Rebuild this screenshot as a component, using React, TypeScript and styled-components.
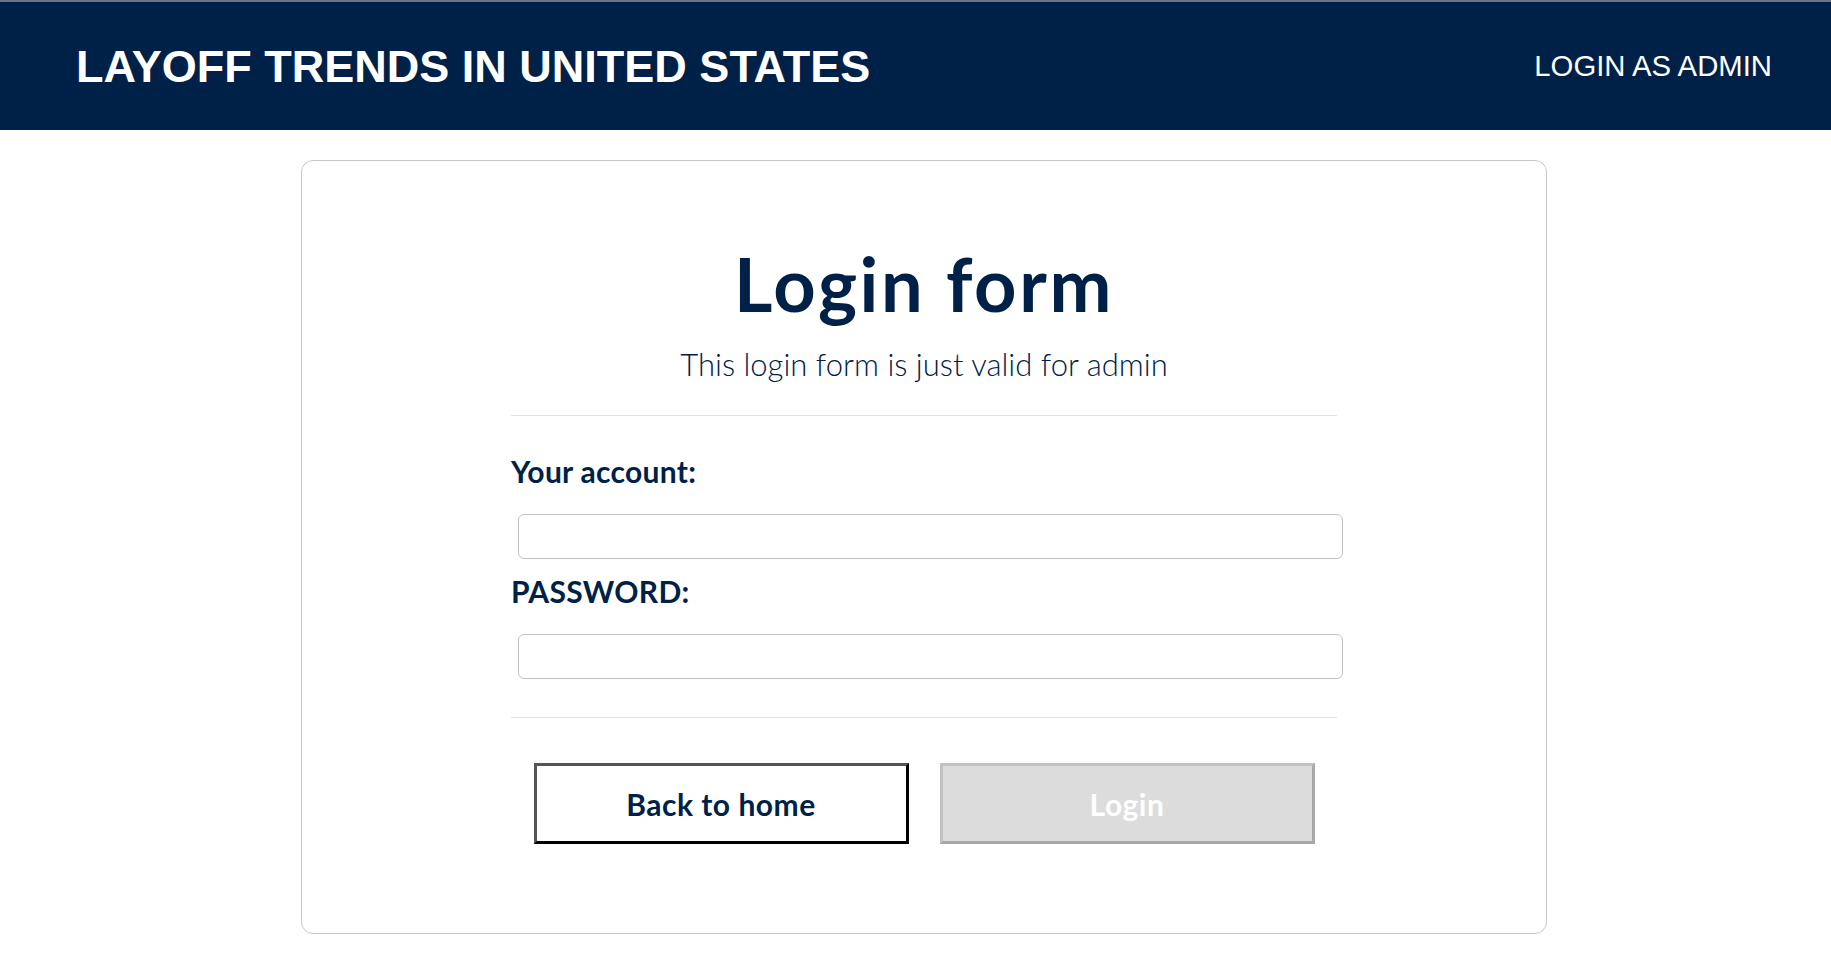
import React from "react";
import styled, { createGlobalStyle } from "styled-components";

const GlobalStyle = createGlobalStyle`
  html, body {
    margin: 0;
    padding: 0;
    background: #ffffff;
  }
  body {
    font-family: "Lato", "Open Sans", sans-serif;
    color: #002147;
  }
  * { box-sizing: border-box; }
`;

const NAVY = "#002147";

const Header = styled.header`
  height: 130px;
  background: ${NAVY};
  border-top: 2px solid #6b7585;
  display: flex;
  align-items: center;
  justify-content: space-between;
  padding: 0 59px 0 76px;
`;

const SiteTitle = styled.h1`
  margin: 0;
  font-family: "Liberation Sans", Arial, sans-serif;
  font-weight: 700;
  font-size: 45px;
  line-height: 1;
  color: #ffffff;
`;

const NavLink = styled.a`
  font-family: "Liberation Sans", Arial, sans-serif;
  font-size: 29.3px;
  line-height: 1;
  color: #ffffff;
  text-decoration: none;
  cursor: pointer;
`;

const Main = styled.main`
  display: flex;
  justify-content: center;
  padding: 30px 0 0 17px;
`;

const Card = styled.section`
  width: 1246px;
  height: 774px;
  border: 1px solid #c6c6c6;
  border-radius: 12px;
  display: flex;
  justify-content: center;
`;

const Column = styled.div`
  width: 826px;
  display: flex;
  flex-direction: column;
`;

const FormTitle = styled.h2`
  margin: 86px 0 0;
  font-size: 74px;
  font-weight: 700;
  line-height: 1;
  letter-spacing: 2.6px;
  text-align: center;
  color: ${NAVY};
`;

const Subtitle = styled.p`
  margin: 28px 0 0;
  font-size: 31px;
  font-weight: 300;
  line-height: 1;
  text-align: center;
  color: ${NAVY};
`;

const Rule = styled.hr<{ $top: number }>`
  margin: ${(p) => p.$top}px 0 0;
  border: 0;
  border-top: 1px solid #e3e3e3;
  width: 100%;
`;

const Label = styled.label<{ $top: number }>`
  display: block;
  margin-top: ${(p) => p.$top}px;
  font-size: 30px;
  font-weight: 700;
  line-height: 1;
  letter-spacing: 0.3px;
  color: ${NAVY};
`;

const Input = styled.input<{ $top: number }>`
  display: block;
  width: 825px;
  height: 45px;
  margin: ${(p) => p.$top}px 0 0 7px;
  border: 1px solid #c2c2c2;
  border-radius: 6px;
  background: #ffffff;
  font-size: 18px;
  padding: 0 10px;
  outline: none;
`;

const ButtonRow = styled.div`
  display: flex;
  justify-content: center;
  gap: 31px;
  margin-top: 45px;
`;

const Button = styled.button<{ $disabled?: boolean }>`
  width: 375px;
  height: 81px;
  font-family: "Lato", "Open Sans", sans-serif;
  font-size: 30px;
  font-weight: 700;
  letter-spacing: 0.5px;
  border-width: 3px;
  border-style: solid;
  border-color: ${(p) =>
    p.$disabled ? "#c2c2c2 #a8a8a8 #a8a8a8 #c2c2c2" : "#555555 #000000 #000000 #555555"};
  background: ${(p) => (p.$disabled ? "#dcdcdc" : "#ffffff")};
  color: ${(p) => (p.$disabled ? "#ffffff" : NAVY)};
  cursor: ${(p) => (p.$disabled ? "default" : "pointer")};
  padding: 0;
`;

export default function App() {
  return (
    <>
      <GlobalStyle />
      <Header>
        <SiteTitle>LAYOFF TRENDS IN UNITED STATES</SiteTitle>
        <NavLink>LOGIN AS ADMIN</NavLink>
      </Header>
      <Main>
        <Card>
          <Column>
            <FormTitle>Login form</FormTitle>
            <Subtitle>This login form is just valid for admin</Subtitle>
            <Rule $top={35} />
            <Label $top={40} htmlFor="account">Your account:</Label>
            <Input id="account" type="text" $top={28} />
            <Label $top={17} htmlFor="password">PASSWORD:</Label>
            <Input id="password" type="password" $top={28} />
            <Rule $top={38} />
            <ButtonRow>
              <Button type="button">Back to home</Button>
              <Button type="button" $disabled disabled>Login</Button>
            </ButtonRow>
          </Column>
        </Card>
      </Main>
    </>
  );
}
